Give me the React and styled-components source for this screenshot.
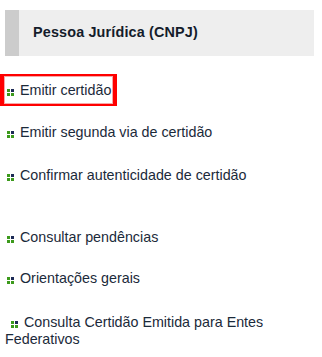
import React from "react";
import styled, { createGlobalStyle } from "styled-components";

const GlobalStyle = createGlobalStyle`
  html, body {
    margin: 0;
    padding: 0;
    background: #ffffff;
  }
  body {
    font-family: "Liberation Sans", Arial, sans-serif;
  }
`;

const items = [
  { label: "Emitir certidão", space: 18, active: true },
  { label: "Emitir segunda via de certidão", space: 10 },
  { label: "Confirmar autenticidade de certidão", space: 11 },
  { label: "Consultar pendências", space: 30 },
  { label: "Orientações gerais", space: 9 },
];

export default function App() {
  return (
    <Wrap>
      <GlobalStyle />
      <Header>Pessoa Jurídica (CNPJ)</Header>
      <List>
        {items.map((item) => (
          <Item key={item.label} $space={item.space}>
            <Link href="#" $active={item.active}>
              <Bullet />
              {item.label}
            </Link>
          </Item>
        ))}
        <WrapItem>
          {" "}
          <Bullet />
          Consulta Certidão Emitida para Entes Federativos
        </WrapItem>
      </List>
    </Wrap>
  );
}

const Wrap = styled.div`
  width: 322px;
  height: 357px;
  overflow: hidden;
  padding-top: 10px;
  box-sizing: border-box;
`;

const Header = styled.div`
  margin: 0 8px 0 5px;
  height: 46px;
  box-sizing: border-box;
  background: #eeeeee;
  border-left: 14px solid #cccccc;
  padding: 14px 0 15px 14px;
  font-size: 14.4px;
  line-height: 17px;
  font-weight: bold;
  letter-spacing: 0.15px;
  color: #141c2b;
`;

const List = styled.div`
  display: flex;
  flex-direction: column;
`;

const Item = styled.div`
  display: flex;
  margin-top: ${(p) => p.$space}px;
`;

const Link = styled.a`
  display: block;
  border-style: solid;
  border-width: 2px 4px;
  border-color: ${(p) => (p.$active ? "#ff0000" : "transparent")};
  box-shadow: ${(p) => (p.$active ? "inset 0 0 0 1px #f7a8a8" : "none")};
  padding: 6px 2px 5px 1px;
  font-size: 14.3px;
  line-height: 17px;
  color: #1b2a3a;
  text-decoration: none;
  white-space: nowrap;
`;

const WrapItem = styled.div`
  margin-top: 20px;
  padding-left: 5px;
  padding-right: 8px;
  font-size: 14.3px;
  line-height: 17px;
  color: #1b2a3a;
  white-space: pre-wrap;
`;

const green = "linear-gradient(#3c9a1c, #3c9a1c)";
const navy = "linear-gradient(#1c2a55, #1c2a55)";

const Bullet = styled.span`
  display: inline-block;
  width: 7px;
  height: 7px;
  margin: 0 6px 0 2px;
  vertical-align: -1px;
  background:
    ${green} 0 0 / 3px 3px no-repeat,
    ${navy} 4px 0 / 3px 3px no-repeat,
    ${green} 0 4px / 3px 3px no-repeat,
    ${green} 4px 4px / 3px 3px no-repeat;
`;
